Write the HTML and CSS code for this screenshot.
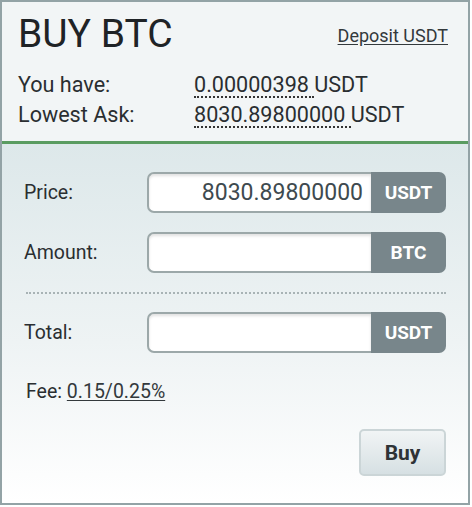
FILE: index.html
```html
<!DOCTYPE html>
<html>
<head>
<meta charset="utf-8">
<link rel="stylesheet" href="styles.css">
</head>
<body>
<div class="panel">
  <div class="head">
    <div class="title-row">
      <h1 class="title">BUY BTC</h1>
      <a class="deposit" href="#">Deposit USDT</a>
    </div>
    <div class="info">
      <span class="info-label">You have:</span>
      <span class="info-val"><span class="dotted">0.00000398 </span>USDT</span>
      <span class="info-label">Lowest Ask:</span>
      <span class="info-val"><span class="dotted">8030.89800000 </span>USDT</span>
    </div>
  </div>
  <div class="form">
    <div class="row">
      <span class="label">Price:</span>
      <div class="field-wrap">
        <div class="field">8030.89800000</div>
        <div class="unit">USDT</div>
      </div>
    </div>
    <div class="row">
      <span class="label">Amount:</span>
      <div class="field-wrap">
        <div class="field"></div>
        <div class="unit">BTC</div>
      </div>
    </div>
    <div class="sep"></div>
    <div class="row">
      <span class="label">Total:</span>
      <div class="field-wrap">
        <div class="field"></div>
        <div class="unit">USDT</div>
      </div>
    </div>
    <div class="fee">Fee: <a href="#" class="fee-link">0.15/0.25%</a></div>
    <div class="actions">
      <button class="buy">Buy</button>
    </div>
  </div>
</div>
</body>
</html>
```
FILE: styles.css
```css
html, body {
  margin: 0;
  padding: 0;
  background: #ffffff;
}
body {
  font-family: Roboto, "Liberation Sans", sans-serif;
  color: #2a2a2a;
}
.panel {
  width: 470px;
  height: 505px;
  box-sizing: border-box;
  border: 2px solid #93a3a6;
  display: flex;
  flex-direction: column;
}
.head {
  background: #f2f5f6;
  padding: 10px 20px 11px 16px;
  border-bottom: 3px solid #5a9c61;
}
.title-row {
  display: flex;
  justify-content: space-between;
  align-items: flex-start;
}
.title {
  margin: 0;
  font-size: 39px;
  line-height: 44px;
  font-weight: 400;
  color: #1f2326;
}
.deposit {
  margin-top: 13px;
  font-size: 18px;
  line-height: 22px;
  color: #33393c;
  text-decoration: underline;
  text-underline-offset: 2px;
}
.info {
  margin-top: 14px;
  display: grid;
  grid-template-columns: 176px auto;
  font-size: 21.6px;
  line-height: 30px;
  color: #2a2e31;
}
.dotted {
  border-bottom: 2px dotted #333;
  line-height: 22px;
  display: inline-block;
  white-space: pre;
}
.form {
  flex: 1;
  background: linear-gradient(to bottom, #dde8ea 0%, #eef3f4 55%, #ffffff 100%);
  padding: 28px 22px 0 22px;
}
.row {
  display: flex;
  align-items: center;
  height: 41px;
  margin-bottom: 19px;
}
.label {
  width: 123px;
  font-size: 19.5px;
  color: #2a2e31;
}
.field-wrap {
  flex: 1;
  display: flex;
  height: 41px;
}
.field {
  flex: 1;
  background: #ffffff;
  border: 2px solid #9ca8a9;
  border-right: none;
  border-radius: 7px 0 0 7px;
  box-shadow: inset 0 2px 3px rgba(0, 0, 0, 0.12);
  font-size: 23px;
  line-height: 37px;
  text-align: right;
  padding-right: 8px;
  color: #3e4a4f;
}
.unit {
  width: 75px;
  background: #78868b;
  border-radius: 0 7px 7px 0;
  color: #ffffff;
  font-weight: 700;
  font-size: 19px;
  display: flex;
  align-items: center;
  justify-content: center;
}
.sep {
  height: 0;
  border-top: 2px dotted #a8b3b5;
  margin: 0 0 18px 2px;
}
.fee {
  margin-top: 27px;
  font-size: 19.5px;
  line-height: 24px;
  color: #2a2e31;
  padding-left: 2px;
}
.fee-link {
  color: #33393c;
  text-decoration: underline;
  text-underline-offset: 2px;
}
.actions {
  display: flex;
  justify-content: flex-end;
  margin-top: 25px;
}
.buy {
  width: 87px;
  height: 47px;
  border: 2px solid #cbd5d7;
  border-radius: 5px;
  background: linear-gradient(to bottom, #f1f4f5, #d6e0e3);
  font-family: Roboto, "Liberation Sans", sans-serif;
  font-weight: 700;
  font-size: 21px;
  color: #2e3336;
  padding: 0;
}
```
